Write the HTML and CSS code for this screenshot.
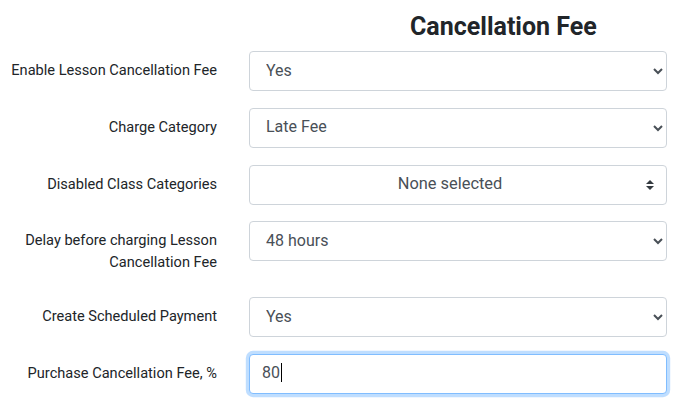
FILE: index.html
```html
<!DOCTYPE html>
<html>
<head>
<meta charset="utf-8">
<link rel="stylesheet" href="styles.css">
</head>
<body>
<div class="page">
  <div class="title-row"><h3 class="title">Cancellation Fee</h3></div>

  <div class="form-row">
    <label class="lbl">Enable Lesson Cancellation Fee</label>
    <div class="ctl">
      <select class="fc"><option>Yes</option><option>No</option></select>
    </div>
  </div>

  <div class="form-row">
    <label class="lbl">Charge Category</label>
    <div class="ctl">
      <select class="fc"><option>Late Fee</option></select>
    </div>
  </div>

  <div class="form-row">
    <label class="lbl">Disabled Class Categories</label>
    <div class="ctl">
      <button class="fc multi" type="button">
        <span class="multi-text">None selected</span>
        <svg class="updown" width="8" height="10" viewBox="0 0 4 5"><path d="M2 0L0 2h4zm0 5L0 3h4z" fill="#343a40"/></svg>
      </button>
    </div>
  </div>

  <div class="form-row">
    <label class="lbl">Delay before charging Lesson Cancellation Fee</label>
    <div class="ctl">
      <select class="fc"><option>48 hours</option></select>
    </div>
  </div>

  <div class="form-row">
    <label class="lbl">Create Scheduled Payment</label>
    <div class="ctl">
      <select class="fc"><option>Yes</option><option>No</option></select>
    </div>
  </div>

  <div class="form-row">
    <label class="lbl">Purchase Cancellation Fee, %</label>
    <div class="ctl">
      <div class="fc input focused"><span class="val">80</span><span class="caret"></span></div>
    </div>
  </div>
</div>
</body>
</html>
```

FILE: styles.css
```css
html, body {
  margin: 0;
  padding: 0;
  background: #fff;
}
body {
  font-family: Roboto, "Liberation Sans", sans-serif;
  color: #212529;
}
.page {
  width: 679px;
}
.title-row {
  padding: 13px 0 10px 410px;
}
.title {
  margin: 0;
  font-size: 25px;
  line-height: 28px;
  font-weight: 700;
  color: #212529;
}
.form-row {
  display: flex;
  align-items: flex-start;
  margin-bottom: 16.8px;
}
.lbl {
  width: 217px;
  flex: none;
  box-sizing: border-box;
  padding: 8px 0 7px 8px;
  text-align: right;
  font-size: 14.6px;
  line-height: 22px;
}
.ctl {
  margin-left: 32px;
  width: 418px;
  flex: none;
}
.fc {
  display: block;
  box-sizing: border-box;
  width: 418px;
  height: 40px;
  margin: 0;
  padding: 5px 12px 7px;
  font-family: Roboto, "Liberation Sans", sans-serif;
  font-size: 16px;
  line-height: 24px;
  color: #495057;
  background: #fff;
  border: 1px solid #ced4da;
  border-radius: 4px;
  outline: none;
}
.multi {
  position: relative;
  padding: 5px 28px 7px 12px;
  text-align: center;
  font-size: 16.4px;
}
.multi-text {
  display: block;
}
.updown {
  position: absolute;
  right: 12px;
  top: 14px;
}
.input {
  display: flex;
  align-items: center;
}
.focused {
  border-color: #80bdff;
  box-shadow: 0 0 0 3.2px rgba(0, 123, 255, 0.25);
}
.caret {
  display: inline-block;
  width: 1px;
  height: 19px;
  margin-left: 1px;
  background: #000;
}
```
